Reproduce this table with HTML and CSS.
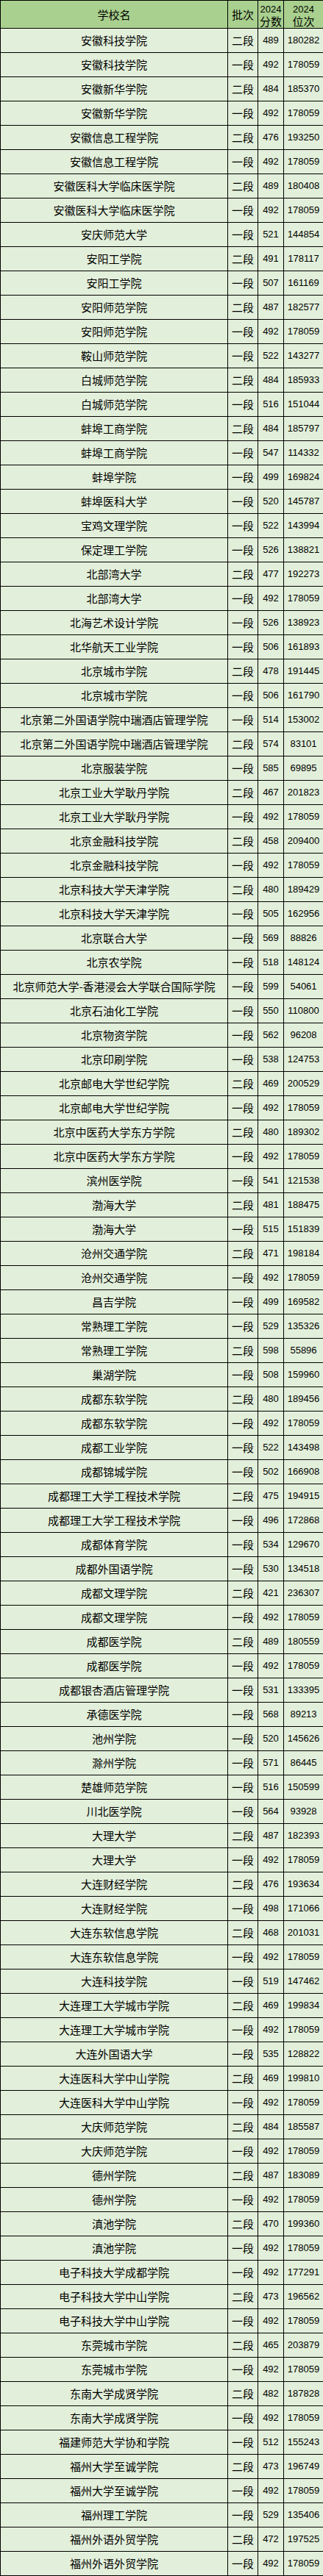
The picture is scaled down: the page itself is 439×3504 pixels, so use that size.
FILE: index.html
```html
<!DOCTYPE html>
<html lang="zh-CN">
<head>
<meta charset="utf-8">
<title>2024 分数位次</title>
<link rel="stylesheet" href="styles.css">
</head>
<body>
<table class="score-table">
<colgroup>
<col class="c-name"><col class="c-batch"><col class="c-score"><col class="c-rank">
</colgroup>
<thead>
<tr class="head-row">
<th>学校名</th>
<th>批次</th>
<th class="two-line"><span class="num">2024</span><br>分数</th>
<th class="two-line"><span class="num">2024</span><br>位次</th>
</tr>
</thead>
<tbody>
<tr><td>安徽科技学院</td><td>二段</td><td class="num">489</td><td class="num">180282</td></tr>
<tr><td>安徽科技学院</td><td>一段</td><td class="num">492</td><td class="num">178059</td></tr>
<tr><td>安徽新华学院</td><td>二段</td><td class="num">484</td><td class="num">185370</td></tr>
<tr><td>安徽新华学院</td><td>一段</td><td class="num">492</td><td class="num">178059</td></tr>
<tr><td>安徽信息工程学院</td><td>二段</td><td class="num">476</td><td class="num">193250</td></tr>
<tr><td>安徽信息工程学院</td><td>一段</td><td class="num">492</td><td class="num">178059</td></tr>
<tr><td>安徽医科大学临床医学院</td><td>二段</td><td class="num">489</td><td class="num">180408</td></tr>
<tr><td>安徽医科大学临床医学院</td><td>一段</td><td class="num">492</td><td class="num">178059</td></tr>
<tr><td>安庆师范大学</td><td>一段</td><td class="num">521</td><td class="num">144854</td></tr>
<tr><td>安阳工学院</td><td>二段</td><td class="num">491</td><td class="num">178117</td></tr>
<tr><td>安阳工学院</td><td>一段</td><td class="num">507</td><td class="num">161169</td></tr>
<tr><td>安阳师范学院</td><td>二段</td><td class="num">487</td><td class="num">182577</td></tr>
<tr><td>安阳师范学院</td><td>一段</td><td class="num">492</td><td class="num">178059</td></tr>
<tr><td>鞍山师范学院</td><td>一段</td><td class="num">522</td><td class="num">143277</td></tr>
<tr><td>白城师范学院</td><td>二段</td><td class="num">484</td><td class="num">185933</td></tr>
<tr><td>白城师范学院</td><td>一段</td><td class="num">516</td><td class="num">151044</td></tr>
<tr><td>蚌埠工商学院</td><td>二段</td><td class="num">484</td><td class="num">185797</td></tr>
<tr><td>蚌埠工商学院</td><td>一段</td><td class="num">547</td><td class="num">114332</td></tr>
<tr><td>蚌埠学院</td><td>一段</td><td class="num">499</td><td class="num">169824</td></tr>
<tr><td>蚌埠医科大学</td><td>一段</td><td class="num">520</td><td class="num">145787</td></tr>
<tr><td>宝鸡文理学院</td><td>一段</td><td class="num">522</td><td class="num">143994</td></tr>
<tr><td>保定理工学院</td><td>一段</td><td class="num">526</td><td class="num">138821</td></tr>
<tr><td>北部湾大学</td><td>二段</td><td class="num">477</td><td class="num">192273</td></tr>
<tr><td>北部湾大学</td><td>一段</td><td class="num">492</td><td class="num">178059</td></tr>
<tr><td>北海艺术设计学院</td><td>一段</td><td class="num">526</td><td class="num">138923</td></tr>
<tr><td>北华航天工业学院</td><td>一段</td><td class="num">506</td><td class="num">161893</td></tr>
<tr><td>北京城市学院</td><td>二段</td><td class="num">478</td><td class="num">191445</td></tr>
<tr><td>北京城市学院</td><td>一段</td><td class="num">506</td><td class="num">161790</td></tr>
<tr><td>北京第二外国语学院中瑞酒店管理学院</td><td>一段</td><td class="num">514</td><td class="num">153002</td></tr>
<tr><td>北京第二外国语学院中瑞酒店管理学院</td><td>二段</td><td class="num">574</td><td class="num">83101</td></tr>
<tr><td>北京服装学院</td><td>一段</td><td class="num">585</td><td class="num">69895</td></tr>
<tr><td>北京工业大学耿丹学院</td><td>二段</td><td class="num">467</td><td class="num">201823</td></tr>
<tr><td>北京工业大学耿丹学院</td><td>一段</td><td class="num">492</td><td class="num">178059</td></tr>
<tr><td>北京金融科技学院</td><td>二段</td><td class="num">458</td><td class="num">209400</td></tr>
<tr><td>北京金融科技学院</td><td>一段</td><td class="num">492</td><td class="num">178059</td></tr>
<tr><td>北京科技大学天津学院</td><td>二段</td><td class="num">480</td><td class="num">189429</td></tr>
<tr><td>北京科技大学天津学院</td><td>一段</td><td class="num">505</td><td class="num">162956</td></tr>
<tr><td>北京联合大学</td><td>一段</td><td class="num">569</td><td class="num">88826</td></tr>
<tr><td>北京农学院</td><td>一段</td><td class="num">518</td><td class="num">148124</td></tr>
<tr><td>北京师范大学-香港浸会大学联合国际学院</td><td>一段</td><td class="num">599</td><td class="num">54061</td></tr>
<tr><td>北京石油化工学院</td><td>一段</td><td class="num">550</td><td class="num">110800</td></tr>
<tr><td>北京物资学院</td><td>一段</td><td class="num">562</td><td class="num">96208</td></tr>
<tr><td>北京印刷学院</td><td>一段</td><td class="num">538</td><td class="num">124753</td></tr>
<tr><td>北京邮电大学世纪学院</td><td>二段</td><td class="num">469</td><td class="num">200529</td></tr>
<tr><td>北京邮电大学世纪学院</td><td>一段</td><td class="num">492</td><td class="num">178059</td></tr>
<tr><td>北京中医药大学东方学院</td><td>二段</td><td class="num">480</td><td class="num">189302</td></tr>
<tr><td>北京中医药大学东方学院</td><td>一段</td><td class="num">492</td><td class="num">178059</td></tr>
<tr><td>滨州医学院</td><td>一段</td><td class="num">541</td><td class="num">121538</td></tr>
<tr><td>渤海大学</td><td>二段</td><td class="num">481</td><td class="num">188475</td></tr>
<tr><td>渤海大学</td><td>一段</td><td class="num">515</td><td class="num">151839</td></tr>
<tr><td>沧州交通学院</td><td>二段</td><td class="num">471</td><td class="num">198184</td></tr>
<tr><td>沧州交通学院</td><td>一段</td><td class="num">492</td><td class="num">178059</td></tr>
<tr><td>昌吉学院</td><td>一段</td><td class="num">499</td><td class="num">169582</td></tr>
<tr><td>常熟理工学院</td><td>一段</td><td class="num">529</td><td class="num">135326</td></tr>
<tr><td>常熟理工学院</td><td>二段</td><td class="num">598</td><td class="num">55896</td></tr>
<tr><td>巢湖学院</td><td>一段</td><td class="num">508</td><td class="num">159960</td></tr>
<tr><td>成都东软学院</td><td>二段</td><td class="num">480</td><td class="num">189456</td></tr>
<tr><td>成都东软学院</td><td>一段</td><td class="num">492</td><td class="num">178059</td></tr>
<tr><td>成都工业学院</td><td>一段</td><td class="num">522</td><td class="num">143498</td></tr>
<tr><td>成都锦城学院</td><td>一段</td><td class="num">502</td><td class="num">166908</td></tr>
<tr><td>成都理工大学工程技术学院</td><td>二段</td><td class="num">475</td><td class="num">194915</td></tr>
<tr><td>成都理工大学工程技术学院</td><td>一段</td><td class="num">496</td><td class="num">172868</td></tr>
<tr><td>成都体育学院</td><td>一段</td><td class="num">534</td><td class="num">129670</td></tr>
<tr><td>成都外国语学院</td><td>一段</td><td class="num">530</td><td class="num">134518</td></tr>
<tr><td>成都文理学院</td><td>二段</td><td class="num">421</td><td class="num">236307</td></tr>
<tr><td>成都文理学院</td><td>一段</td><td class="num">492</td><td class="num">178059</td></tr>
<tr><td>成都医学院</td><td>二段</td><td class="num">489</td><td class="num">180559</td></tr>
<tr><td>成都医学院</td><td>一段</td><td class="num">492</td><td class="num">178059</td></tr>
<tr><td>成都银杏酒店管理学院</td><td>一段</td><td class="num">531</td><td class="num">133395</td></tr>
<tr><td>承德医学院</td><td>一段</td><td class="num">568</td><td class="num">89213</td></tr>
<tr><td>池州学院</td><td>一段</td><td class="num">520</td><td class="num">145626</td></tr>
<tr><td>滁州学院</td><td>一段</td><td class="num">571</td><td class="num">86445</td></tr>
<tr><td>楚雄师范学院</td><td>一段</td><td class="num">516</td><td class="num">150599</td></tr>
<tr><td>川北医学院</td><td>一段</td><td class="num">564</td><td class="num">93928</td></tr>
<tr><td>大理大学</td><td>二段</td><td class="num">487</td><td class="num">182393</td></tr>
<tr><td>大理大学</td><td>一段</td><td class="num">492</td><td class="num">178059</td></tr>
<tr><td>大连财经学院</td><td>二段</td><td class="num">476</td><td class="num">193634</td></tr>
<tr><td>大连财经学院</td><td>一段</td><td class="num">498</td><td class="num">171066</td></tr>
<tr><td>大连东软信息学院</td><td>二段</td><td class="num">468</td><td class="num">201031</td></tr>
<tr><td>大连东软信息学院</td><td>一段</td><td class="num">492</td><td class="num">178059</td></tr>
<tr><td>大连科技学院</td><td>一段</td><td class="num">519</td><td class="num">147462</td></tr>
<tr><td>大连理工大学城市学院</td><td>二段</td><td class="num">469</td><td class="num">199834</td></tr>
<tr><td>大连理工大学城市学院</td><td>一段</td><td class="num">492</td><td class="num">178059</td></tr>
<tr><td>大连外国语大学</td><td>一段</td><td class="num">535</td><td class="num">128822</td></tr>
<tr><td>大连医科大学中山学院</td><td>二段</td><td class="num">469</td><td class="num">199810</td></tr>
<tr><td>大连医科大学中山学院</td><td>一段</td><td class="num">492</td><td class="num">178059</td></tr>
<tr><td>大庆师范学院</td><td>二段</td><td class="num">484</td><td class="num">185587</td></tr>
<tr><td>大庆师范学院</td><td>一段</td><td class="num">492</td><td class="num">178059</td></tr>
<tr><td>德州学院</td><td>二段</td><td class="num">487</td><td class="num">183089</td></tr>
<tr><td>德州学院</td><td>一段</td><td class="num">492</td><td class="num">178059</td></tr>
<tr><td>滇池学院</td><td>二段</td><td class="num">470</td><td class="num">199360</td></tr>
<tr><td>滇池学院</td><td>一段</td><td class="num">492</td><td class="num">178059</td></tr>
<tr><td>电子科技大学成都学院</td><td>一段</td><td class="num">492</td><td class="num">177291</td></tr>
<tr><td>电子科技大学中山学院</td><td>二段</td><td class="num">473</td><td class="num">196562</td></tr>
<tr><td>电子科技大学中山学院</td><td>一段</td><td class="num">492</td><td class="num">178059</td></tr>
<tr><td>东莞城市学院</td><td>二段</td><td class="num">465</td><td class="num">203879</td></tr>
<tr><td>东莞城市学院</td><td>一段</td><td class="num">492</td><td class="num">178059</td></tr>
<tr><td>东南大学成贤学院</td><td>二段</td><td class="num">482</td><td class="num">187828</td></tr>
<tr><td>东南大学成贤学院</td><td>一段</td><td class="num">492</td><td class="num">178059</td></tr>
<tr><td>福建师范大学协和学院</td><td>一段</td><td class="num">512</td><td class="num">155243</td></tr>
<tr><td>福州大学至诚学院</td><td>二段</td><td class="num">473</td><td class="num">196749</td></tr>
<tr><td>福州大学至诚学院</td><td>一段</td><td class="num">492</td><td class="num">178059</td></tr>
<tr><td>福州理工学院</td><td>一段</td><td class="num">529</td><td class="num">135406</td></tr>
<tr><td>福州外语外贸学院</td><td>二段</td><td class="num">472</td><td class="num">197525</td></tr>
<tr><td>福州外语外贸学院</td><td>一段</td><td class="num">492</td><td class="num">178059</td></tr>
</tbody>
</table>
</body>
</html>
```
FILE: styles.css
```css
html, body {
  margin: 0;
  padding: 0;
  background: #ffffff;
}

body {
  font-family: "Noto Sans CJK SC", "Noto Sans", sans-serif;
  font-size: 15px;
  color: #000000;
}

.score-table {
  border-collapse: collapse;
  table-layout: fixed;
  width: 439px;
}

.c-name { width: 309px; }
.c-batch { width: 41px; }
.c-score { width: 35px; }
.c-rank { width: 54px; }

.score-table th,
.score-table td {
  border: 1px solid #000000;
  padding: 0;
  text-align: center;
  vertical-align: middle;
  white-space: nowrap;
  overflow: hidden;
  line-height: 18px;
  font-weight: normal;
}

.score-table th {
  background: #a9d08e;
}

.score-table td {
  background: #e2efda;
}

.head-row {
  height: 38px;
}

.score-table tbody tr {
  height: 33px;
}

.score-table th.two-line {
  line-height: 16px;
}

.num {
  font-family: "Liberation Sans", Arial, sans-serif;
  font-size: 13px;
}
```
